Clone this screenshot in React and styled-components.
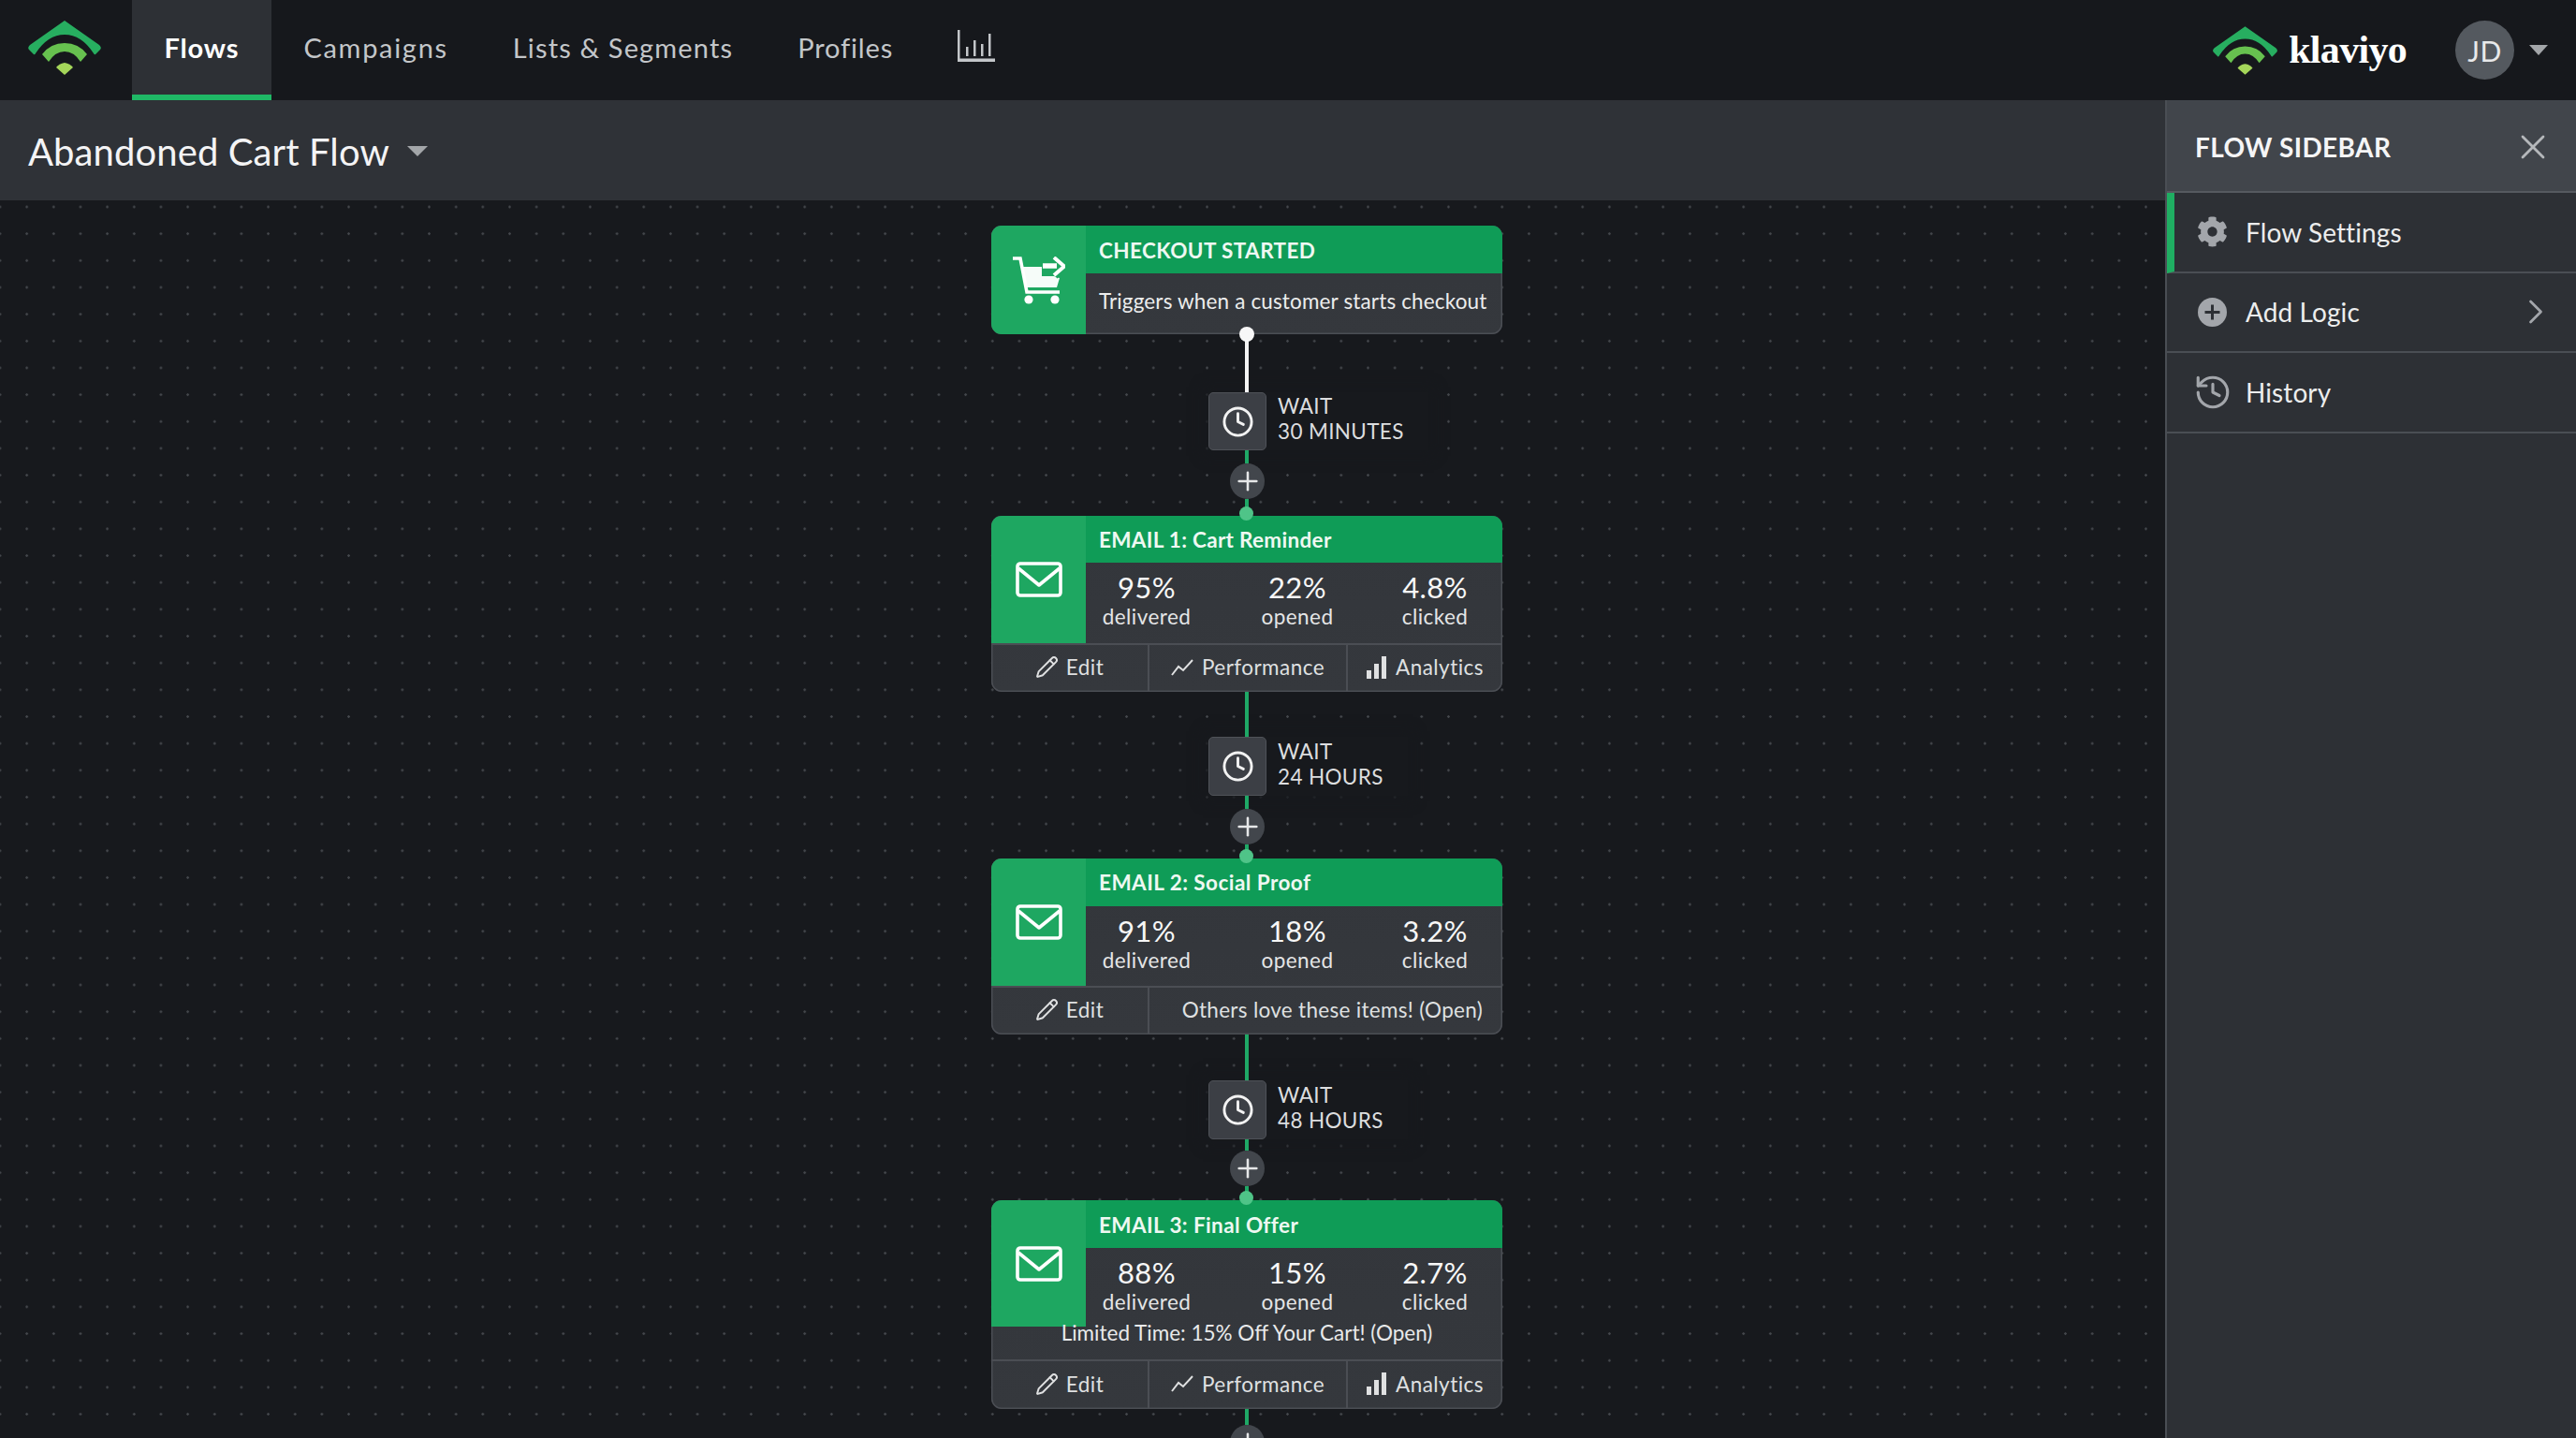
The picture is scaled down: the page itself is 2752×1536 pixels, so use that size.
import React from 'react';
import styled, { createGlobalStyle } from 'styled-components';
import { Clock, History, Pencil, X, ChevronRight, Plus } from 'lucide-react';
import { FaCog } from 'react-icons/fa';

const GlobalStyle = createGlobalStyle`
  html, body {
    margin: 0;
    padding: 0;
    background: #17191d;
  }
  * {
    box-sizing: border-box;
  }
`;

const Page = styled.div`
  width: 2752px;
  height: 1536px;
  overflow: hidden;
  display: flex;
  flex-direction: column;
  font-family: "Lato", "Liberation Sans", sans-serif;
  color: #fff;
`;

const TopBar = styled.header`
  height: 107px;
  flex: none;
  display: flex;
  align-items: stretch;
  background: #16181c;
  padding: 0 30px 0 29px;
`;

const NavLogo = styled.div`
  width: 112px;
  display: flex;
  align-items: flex-start;
  padding-top: 22px;
`;

const NavTab = styled.div`
  display: flex;
  align-items: center;
  padding: 0 34.5px;
  font-size: 29px;
  letter-spacing: ${p => p.$ls}px;
  font-weight: ${p => (p.$active ? 700 : 400)};
  color: ${p => (p.$active ? '#fff' : '#c3c6c9')};
  background: ${p => (p.$active ? '#2d3035' : 'transparent')};
  border-bottom: 6px solid ${p => (p.$active ? '#1fb866' : 'transparent')};
  height: 107px;
`;

const NavIcon = styled.div`
  display: flex;
  align-items: flex-start;
  padding: 32px 0 0 34.5px;
`;

const NavRight = styled.div`
  margin-left: auto;
  display: flex;
  align-items: center;
`;

const BrandName = styled.span`
  font-family: "Liberation Serif", serif;
  font-weight: 700;
  font-size: 42px;
  letter-spacing: -0.7px;
  margin: -2px 0 0 11px;
`;

const Avatar = styled.div`
  width: 63px;
  height: 63px;
  margin-left: 52px;
  border-radius: 50%;
  background: #54595f;
  display: flex;
  align-items: center;
  justify-content: center;
  font-size: 30px;
  letter-spacing: 0.6px;
  color: #e8e9ea;
`;

const Caret = styled.span`
  display: inline-block;
  width: 0;
  height: 0;
  border-left: ${p => p.$w}px solid transparent;
  border-right: ${p => p.$w}px solid transparent;
  border-top: ${p => p.$h}px solid #a3a6a9;
  margin-left: ${p => p.$gap}px;
`;

const Workspace = styled.div`
  flex: 1;
  display: flex;
  min-height: 0;
`;

const MainArea = styled.main`
  flex: 1;
  display: flex;
  flex-direction: column;
  min-width: 0;
`;

const TitleBar = styled.div`
  height: 107px;
  flex: none;
  display: flex;
  align-items: center;
  padding: 2px 0 0 30px;
  background: #2f3237;
`;

const FlowTitle = styled.h1`
  margin: 0;
  font-size: 40px;
  font-weight: 400;
  letter-spacing: 0.1px;
  color: #f4f4f5;
`;

const Canvas = styled.div`
  flex: 1;
  min-height: 0;
  overflow: hidden;
  padding: 27px 0 0 1059px;
  background-color: #17191d;
  background-image: radial-gradient(circle, #44474c 1.1px, transparent 1.5px);
  background-size: 28.67px 28.67px;
  background-position: -14.33px -7.33px;
`;

const FlowColumn = styled.div`
  width: 546px;
  display: flex;
  flex-direction: column;
  align-items: flex-start;
`;

const FlowCard = styled.section`
  position: relative;
  width: 546px;
  flex: none;
`;

const CardClip = styled.div`
  border-radius: 11px;
  overflow: hidden;
  background: linear-gradient(180deg, #33363b, #35383d);
  box-shadow: inset 0 0 0 1.5px #4b4e54;
`;

const CardMain = styled.div`
  display: flex;
  align-items: stretch;
`;

const IconPanel = styled.div`
  width: 101px;
  flex: none;
  display: flex;
  align-items: center;
  justify-content: center;
  background: #1ea761;
`;

const CardContent = styled.div`
  flex: 1;
  min-width: 0;
`;

const CardHeader = styled.div`
  height: ${p => p.$h}px;
  display: flex;
  align-items: center;
  padding: ${p => p.$pt || 0}px 0 0 14px;
  background: #0f9c57;
  font-size: 22.5px;
  font-weight: 700;
  letter-spacing: ${p => p.$ls}px;
  color: #eef8f2;
`;

const TriggerText = styled.div`
  height: 65px;
  display: flex;
  align-items: center;
  padding: 0 0 6px 14px;
  font-size: 22.5px;
  letter-spacing: 0.15px;
  color: #eceded;
`;

const StatsRow = styled.div`
  display: grid;
  grid-template-columns: 130px 192px 102px;
  height: ${p => p.$h}px;
  padding-top: 8px;
`;

const Stat = styled.div`
  display: flex;
  flex-direction: column;
  align-items: center;
`;

const StatValue = styled.span`
  font-size: 31px;
  line-height: 36px;
  letter-spacing: 0.4px;
  color: #f7f7f7;
`;

const StatLabel = styled.span`
  font-size: 22.5px;
  line-height: 28px;
  letter-spacing: 0.45px;
  color: #e4e5e6;
`;

const CardNote = styled.div`
  height: 35px;
  line-height: 14px;
  text-align: center;
  font-size: 22.5px;
  letter-spacing: 0;
  color: #e8e9ea;
`;

const ActionRow = styled.div`
  display: grid;
  grid-template-columns: ${p => p.$cols};
  height: ${p => p.$h}px;
  border-top: 2px solid #4b4e54;
`;

const ActionCell = styled.div`
  display: flex;
  align-items: center;
  justify-content: ${p => (p.$right ? 'flex-end' : 'center')};
  gap: ${p => p.$gap || 9}px;
  padding-right: ${p => (p.$right ? 21 : 0)}px;
  padding-bottom: 3px;
  font-size: 22.5px;
  letter-spacing: ${p => (p.$right ? 0.3 : 0.45)}px;
  color: #dfe0e1;
  & + & {
    border-left: 2px solid #4b4e54;
  }
`;

const Port = styled.span`
  position: absolute;
  left: 265px;
  width: ${p => p.$size}px;
  height: ${p => p.$size}px;
  border-radius: 50%;
  background: ${p => p.$color};
  z-index: 2;
`;

const TopPort = styled(Port)`
  top: -10px;
`;

const BottomPort = styled(Port)`
  bottom: -8px;
`;

const Stem = styled.div`
  position: relative;
  z-index: 1;
  width: 4px;
  flex: none;
  margin-left: 271px;
  height: ${p => p.$h}px;
  background: ${p => p.$color || '#1fa866'};
`;

const WaitRow = styled.div`
  display: flex;
  align-items: center;
  flex: none;
  margin-left: 232px;
  background: #17191d;
  box-shadow: 0 0 12px 6px #17191d;
`;

const WaitBox = styled.div`
  width: 62px;
  height: ${p => p.$h}px;
  flex: none;
  display: flex;
  align-items: center;
  justify-content: center;
  border-radius: 5px;
  background: #3c3f45;
  border: 1.5px solid #4f5258;
  color: #f2f2f2;
`;

const WaitLabel = styled.div`
  padding: 0 26px 6px 12px;
  font-size: 22.5px;
  line-height: 27px;
  letter-spacing: 0.35px;
  color: #dcdddf;
`;

const PlusButton = styled.div`
  position: relative;
  z-index: 1;
  width: 37px;
  height: 38px;
  flex: none;
  margin-left: 255px;
  border-radius: 50%;
  background: #42464c;
  display: flex;
  align-items: center;
  justify-content: center;
  color: #e6e7e8;
`;

const Sidebar = styled.aside`
  width: 439px;
  flex: none;
  display: flex;
  flex-direction: column;
  background: #2d3035;
  border-left: 2px solid #4a4e54;
`;

const SidebarHeader = styled.div`
  height: 99px;
  flex: none;
  display: flex;
  align-items: center;
  justify-content: space-between;
  padding: 2px 24px 0 30px;
  background: #41454b;
  border-bottom: 2px solid #565a60;
  font-size: 28px;
  font-weight: 700;
  letter-spacing: 0.4px;
  color: #f5f5f6;
`;

const CloseButton = styled.span`
  display: flex;
  color: #b5b8bb;
`;

const SidebarItem = styled.div`
  height: 85.5px;
  flex: none;
  display: flex;
  align-items: center;
  gap: 20px;
  padding: 0 21px 0 ${p => (p.$active ? 25 : 33)}px;
  border-left: ${p => (p.$active ? '8px solid #1fae62' : '0 solid transparent')};
  border-bottom: 2px solid #4a4e54;
  font-size: 28px;
  letter-spacing: 0.1px;
  color: #eceded;
`;

const SidebarIcon = styled.span`
  width: 31px;
  height: 36px;
  flex: none;
  display: flex;
  align-items: center;
  justify-content: center;
  color: #a3a6ab;
  svg {
    flex: none;
  }
`;

const ItemChevron = styled.span`
  margin-left: auto;
  display: flex;
  color: #a3a6ab;
`;

function LogoMark({ width, height }) {
  return (
    <svg width={width} height={height} viewBox="0 0 80 58">
      <path d="M40 0L77 26Q80 29 78 31L73 36Q72 37 71 35Q58 15 40 15Q22 15 9 35Q8 37 7 36L2 31Q0 29 3 26Z" fill="#27ae60" />
      <path d="M40 24Q55 24 64 36L57 44Q50 33 40 33Q30 33 23 44L16 36Q25 24 40 24Z" fill="#67c14f" />
      <path d="M40 45Q46 46 49 50L40 58L31 50Q34 46 40 45Z" fill="#a5d65a" />
    </svg>
  );
}

function BarsNavIcon() {
  return (
    <svg width="40" height="34" viewBox="0 0 40 34" fill="#c3c6c9">
      <rect x="0" y="0" width="2.5" height="34" />
      <rect x="0" y="30.5" width="40" height="3.5" />
      <rect x="9" y="18" width="2.5" height="10" />
      <rect x="17" y="11" width="2.5" height="17" />
      <rect x="25" y="15" width="2.5" height="13" />
      <rect x="33" y="4" width="2.5" height="24" />
    </svg>
  );
}

function CartIcon() {
  return (
    <svg width="56" height="51" viewBox="0 0 56 51">
      <path d="M0 2H8L15 38H50" fill="none" stroke="#fff" strokeWidth="3.6" />
      <path d="M10 11H31V21H44L50 23L47 33H13Z" fill="#fff" opacity="0.96" />
      <path d="M32 10H47M44 2L53 11L44 20" fill="none" stroke="#1ea761" strokeWidth="10" />
      <path d="M32 10H47" fill="none" stroke="#fff" strokeWidth="5.5" />
      <path d="M44 1L55 10.5L44 20" fill="none" stroke="#fff" strokeWidth="4" />
      <circle cx="17" cy="46" r="4.6" fill="#fff" />
      <circle cx="45" cy="46" r="4.6" fill="#fff" />
    </svg>
  );
}

function MailIcon() {
  return (
    <svg width="50" height="38" viewBox="0 0 50 38" fill="none" stroke="#fff" strokeWidth="3.6" strokeLinejoin="round">
      <rect x="2" y="2" width="46" height="34" rx="3" />
      <path d="M3 7L25 25L47 7" />
    </svg>
  );
}

function TrendIcon() {
  return (
    <svg width="24" height="18" viewBox="0 0 24 18" fill="none" stroke="#dfe0e1" strokeWidth="2">
      <path d="M1 17L8 8L13 12L23 1" />
    </svg>
  );
}

function BarsIcon() {
  return (
    <svg width="21" height="24" viewBox="0 0 21 24" fill="#dfe0e1">
      <rect x="0" y="15" width="5" height="9" />
      <rect x="8" y="8" width="5" height="16" />
      <rect x="16" y="0" width="5" height="24" />
    </svg>
  );
}

function PlusCircleIcon() {
  return (
    <svg width="31" height="31" viewBox="0 0 31 31">
      <circle cx="15.5" cy="15.5" r="15.5" fill="#a3a6ab" />
      <path d="M15.5 7.5V23.5M7.5 15.5H23.5" stroke="#2d3035" strokeWidth="3" />
    </svg>
  );
}

function Wait({ label, h }) {
  return (
    <WaitRow>
      <WaitBox $h={h}><Clock size={35} strokeWidth={2} /></WaitBox>
      <WaitLabel>WAIT<br />{label}</WaitLabel>
    </WaitRow>
  );
}

function Connector({ label, before, after, below, color, h }) {
  return (
    <>
      <Stem $h={before} $color={color} />
      <Wait label={label} h={h} />
      <Stem $h={after} />
      <PlusButton><Plus size={32} strokeWidth={1.9} /></PlusButton>
      <Stem $h={below} />
    </>
  );
}

function EmailCard({ title, titleLs, stats, note, actions, headerH, statsH, actionsH, headerPt }) {
  return (
    <FlowCard>
      <TopPort $size={15} $color="#4fc488" />
      <CardClip>
        <CardMain>
          <IconPanel><MailIcon /></IconPanel>
          <CardContent>
            <CardHeader $h={headerH} $ls={titleLs} $pt={headerPt}>{title}</CardHeader>
            <StatsRow $h={statsH}>
              {stats.map(s => (
                <Stat key={s.label}>
                  <StatValue>{s.value}</StatValue>
                  <StatLabel>{s.label}</StatLabel>
                </Stat>
              ))}
            </StatsRow>
          </CardContent>
        </CardMain>
        {note && <CardNote>{note}</CardNote>}
        <ActionRow $h={actionsH} $cols={actions ? '167px 212px 1fr' : '167px 1fr'}>
          <ActionCell $gap={8}><Pencil size={25} strokeWidth={1.9} />Edit</ActionCell>
          {actions ? (
            <>
              <ActionCell><TrendIcon />Performance</ActionCell>
              <ActionCell $gap={10}><BarsIcon />Analytics</ActionCell>
            </>
          ) : (
            <ActionCell $right>Others love these items! (Open)</ActionCell>
          )}
        </ActionRow>
      </CardClip>
    </FlowCard>
  );
}

export default function App() {
  return (
    <Page>
      <GlobalStyle />
      <TopBar>
        <NavLogo><LogoMark width={80} height={58} /></NavLogo>
        <NavTab $active $ls={0.85}>Flows</NavTab>
        <NavTab $ls={1.7}>Campaigns</NavTab>
        <NavTab $ls={1.15}>Lists &amp; Segments</NavTab>
        <NavTab $ls={0.85}>Profiles</NavTab>
        <NavIcon><BarsNavIcon /></NavIcon>
        <NavRight>
          <LogoMark width={71} height={52} />
          <BrandName>klaviyo</BrandName>
          <Avatar>JD</Avatar>
          <Caret $w={10} $h={11} $gap={16} />
        </NavRight>
      </TopBar>
      <Workspace>
        <MainArea>
          <TitleBar>
            <FlowTitle>Abandoned Cart Flow</FlowTitle>
            <Caret $w={11.5} $h={11} $gap={19} />
          </TitleBar>
          <Canvas>
            <FlowColumn>
              <FlowCard>
                <BottomPort $size={16} $color="#f7f7f7" />
                <CardClip>
                  <CardMain>
                    <IconPanel><CartIcon /></IconPanel>
                    <CardContent>
                      <CardHeader $h={51} $ls={0.4} $pt={2}>CHECKOUT STARTED</CardHeader>
                      <TriggerText>Triggers when a customer starts checkout</TriggerText>
                    </CardContent>
                  </CardMain>
                </CardClip>
              </FlowCard>
              <Connector label="30 MINUTES" before={62} after={14} below={18} color="#f4f4f4" h={62} />
              <EmailCard
                title="EMAIL 1: Cart Reminder"
                titleLs={0.3}
                headerH={50}
                statsH={86}
                actionsH={52}
                actions
                stats={[
                  { value: '95%', label: 'delivered' },
                  { value: '22%', label: 'opened' },
                  { value: '4.8%', label: 'clicked' },
                ]}
              />
              <Connector label="24 HOURS" before={48} after={14} below={15} h={63} />
              <EmailCard
                title="EMAIL 2: Social Proof"
                titleLs={0.45}
                headerH={51}
                statsH={85}
                actionsH={52}
                stats={[
                  { value: '91%', label: 'delivered' },
                  { value: '18%', label: 'opened' },
                  { value: '3.2%', label: 'clicked' },
                ]}
              />
              <Connector label="48 HOURS" before={49} after={12} below={15} h={63} />
              <EmailCard
                title="EMAIL 3: Final Offer"
                titleLs={0.4}
                headerH={51}
                headerPt={1}
                statsH={84}
                actionsH={53}
                actions
                note="Limited Time: 15% Off Your Cart! (Open)"
                stats={[
                  { value: '88%', label: 'delivered' },
                  { value: '15%', label: 'opened' },
                  { value: '2.7%', label: 'clicked' },
                ]}
              />
              <Stem $h={17} />
              <PlusButton><Plus size={32} strokeWidth={1.9} /></PlusButton>
            </FlowColumn>
          </Canvas>
        </MainArea>
        <Sidebar>
          <SidebarHeader>
            FLOW SIDEBAR
            <CloseButton><X size={44} strokeWidth={1.5} /></CloseButton>
          </SidebarHeader>
          <SidebarItem $active>
            <SidebarIcon><FaCog size={33} /></SidebarIcon>
            Flow Settings
          </SidebarItem>
          <SidebarItem>
            <SidebarIcon><PlusCircleIcon /></SidebarIcon>
            Add Logic
            <ItemChevron><ChevronRight size={44} strokeWidth={1.5} /></ItemChevron>
          </SidebarItem>
          <SidebarItem>
            <SidebarIcon><History size={42} strokeWidth={1.8} /></SidebarIcon>
            History
          </SidebarItem>
        </Sidebar>
      </Workspace>
    </Page>
  );
}
